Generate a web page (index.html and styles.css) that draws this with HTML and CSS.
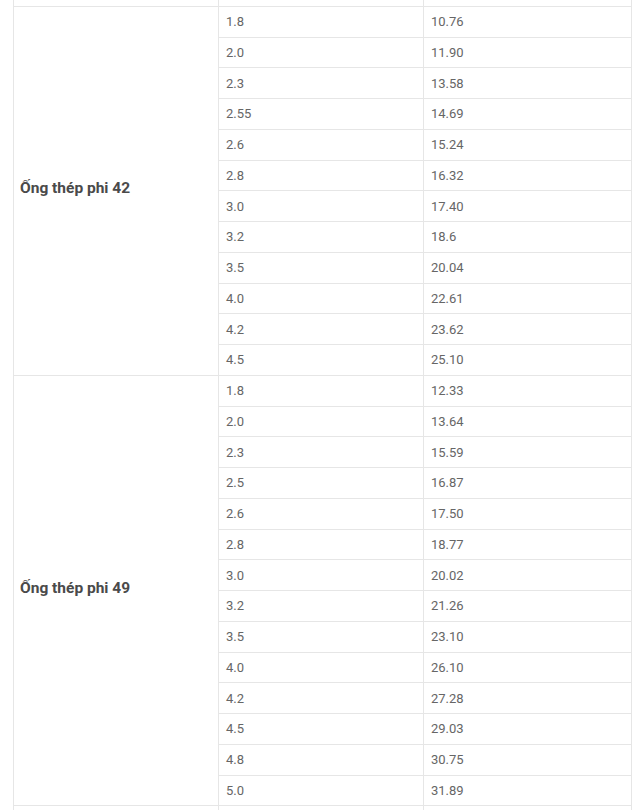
FILE: index.html
```html
<!DOCTYPE html>
<html>
<head>
<meta charset="utf-8">
<link rel="stylesheet" href="styles.css">
</head>
<body>
<div class="wrap">
<table class="spec">
<colgroup><col class="c1"><col class="c2"><col class="c3"></colgroup>
<tbody>
<tr class="prev"><td></td><td></td><td></td></tr>
<tr><td class="label" rowspan="12"><strong>Ống thép phi 42</strong></td><td>1.8</td><td>10.76</td></tr>
<tr><td>2.0</td><td>11.90</td></tr>
<tr><td>2.3</td><td>13.58</td></tr>
<tr><td>2.55</td><td>14.69</td></tr>
<tr><td>2.6</td><td>15.24</td></tr>
<tr><td>2.8</td><td>16.32</td></tr>
<tr><td>3.0</td><td>17.40</td></tr>
<tr><td>3.2</td><td>18.6</td></tr>
<tr><td>3.5</td><td>20.04</td></tr>
<tr><td>4.0</td><td>22.61</td></tr>
<tr><td>4.2</td><td>23.62</td></tr>
<tr><td>4.5</td><td>25.10</td></tr>
<tr><td class="label" rowspan="14"><strong>Ống thép phi 49</strong></td><td>1.8</td><td>12.33</td></tr>
<tr><td>2.0</td><td>13.64</td></tr>
<tr><td>2.3</td><td>15.59</td></tr>
<tr><td>2.5</td><td>16.87</td></tr>
<tr><td>2.6</td><td>17.50</td></tr>
<tr><td>2.8</td><td>18.77</td></tr>
<tr><td>3.0</td><td>20.02</td></tr>
<tr><td>3.2</td><td>21.26</td></tr>
<tr><td>3.5</td><td>23.10</td></tr>
<tr><td>4.0</td><td>26.10</td></tr>
<tr><td>4.2</td><td>27.28</td></tr>
<tr><td>4.5</td><td>29.03</td></tr>
<tr><td>4.8</td><td>30.75</td></tr>
<tr><td>5.0</td><td>31.89</td></tr>
<tr class="next"><td></td><td></td><td></td></tr>
</tbody>
</table>
</div>
</body>
</html>
```
FILE: styles.css
```css
html, body {
  margin: 0;
  padding: 0;
  background: #fff;
}
.wrap {
  padding-left: 13px;
  overflow: hidden;
  height: 810px;
}
.spec {
  border-collapse: collapse;
  width: 618px;
  table-layout: fixed;
  margin-top: -25px;
  font-family: Roboto, "Noto Sans", sans-serif;
  font-size: 13px;
  color: #666;
}
.c1 { width: 205px; }
.c2 { width: 205px; }
.c3 { width: 208px; }
.spec td {
  border: 1px solid #e6e6e6;
  padding: 0 7px;
  height: 30.76px;
  line-height: 15px;
  vertical-align: middle;
  box-sizing: border-box;
}
.spec tr.prev td, .spec tr.next td {
  height: 30.76px;
}
.spec td.label {
  padding: 0 6px 5px;
  font-size: 15.5px;
  color: #4a4a4a;
}
.spec td.label strong {
  font-weight: 700;
}
```
